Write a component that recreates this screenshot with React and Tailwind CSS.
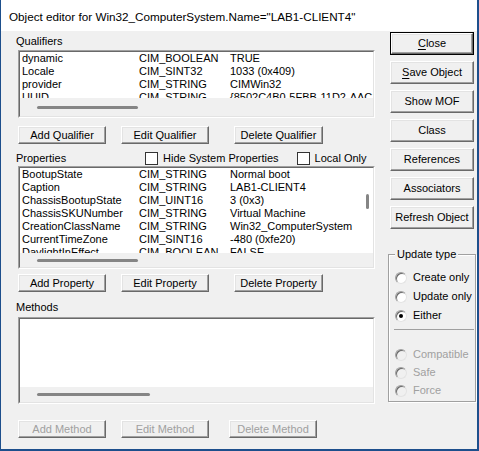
import clsx from "clsx";

const FONT = { fontFamily: "'Liberation Sans', Arial, sans-serif" };

const QUALIFIERS = [
  ["dynamic", "CIM_BOOLEAN", "TRUE"],
  ["Locale", "CIM_SINT32", "1033 (0x409)"],
  ["provider", "CIM_STRING", "CIMWin32"],
  ["UUID", "CIM_STRING", "{8502C4B0-5FBB-11D2-AAC1-006008C78BC7}"],
];

const PROPERTIES = [
  ["BootupState", "CIM_STRING", "Normal boot"],
  ["Caption", "CIM_STRING", "LAB1-CLIENT4"],
  ["ChassisBootupState", "CIM_UINT16", "3 (0x3)"],
  ["ChassisSKUNumber", "CIM_STRING", "Virtual Machine"],
  ["CreationClassName", "CIM_STRING", "Win32_ComputerSystem"],
  ["CurrentTimeZone", "CIM_SINT16", "-480 (0xfe20)"],
  ["DaylightInEffect", "CIM_BOOLEAN", "FALSE"],
];

// classic raised push button
const Btn = ({ children, className, disabled }) => (
  <button
    className={clsx(
      "flex items-center justify-center whitespace-nowrap bg-[#f0f0f0] text-[11px] leading-none border border-t-white border-l-white border-b-[#696969] border-r-[#696969] shadow-[inset_-1px_-1px_0_#a0a0a0,inset_1px_1px_0_#e3e3e3]",
      disabled ? "text-[#a0a0a0]" : "text-black",
      className
    )}
  >
    {children}
  </button>
);

// sunken list box with a thin horizontal scrollbar strip
const ListBox = ({ rows, height, bodyHeight, thumbW, vthumb }) => (
  <div
    className={clsx(
      "relative w-[357px] border border-t-[#a0a0a0] border-l-[#a0a0a0] border-b-white border-r-white",
      height
    )}
  >
    <div className="flex h-full flex-col border border-t-[#696969] border-l-[#696969] border-b-[#e3e3e3] border-r-[#e3e3e3]">
      <div className={clsx("overflow-hidden bg-white", bodyHeight)}>
        {rows.map(([a, b, c]) => (
          <div key={a} className="flex h-[13px] items-center whitespace-nowrap text-[11px] leading-none text-black">
            <span className="w-[119px] shrink-0 pl-[2px]">{a}</span>
            <span className="w-[91px] shrink-0">{b}</span>
            <span>{c}</span>
          </div>
        ))}
      </div>
      <div className="flex flex-1 items-center bg-[#f0f0f0] pl-[17px]">
        <div className={clsx("h-[3px] rounded-full bg-[#858585]", thumbW)} />
      </div>
    </div>
    {vthumb && <div className="absolute left-[347px] top-[27px] h-[15px] w-[3px] rounded-full bg-[#858585]" />}
  </div>
);

const Check = ({ label }) => (
  <div className="flex shrink-0 items-center gap-[5px] whitespace-nowrap">
    <div className="h-[13px] w-[13px] shrink-0 border border-[#333] bg-white" />
    <span className="text-[11px] leading-none">{label}</span>
  </div>
);

const Radio = ({ label, checked, disabled }) => (
  <div className="flex h-[13px] items-center gap-[6px] whitespace-nowrap">
    <div
      className={clsx(
        "flex h-[12px] w-[12px] shrink-0 items-center justify-center rounded-full border border-t-[#a0a0a0] border-l-[#a0a0a0] border-b-[#e3e3e3] border-r-[#e3e3e3] shadow-[inset_1px_1px_0_#696969]",
        disabled ? "bg-[#f0f0f0]" : "bg-white"
      )}
    >
      {checked && <div className="h-[4px] w-[4px] rounded-full bg-black" />}
    </div>
    <span className={clsx("text-[11px] leading-none", disabled ? "text-[#a0a0a0]" : "text-black")}>{label}</span>
  </div>
);

export default function App() {
  return (
    <div className="flex h-[451px] w-[479px] flex-col bg-[#1d4f8c] pb-[2px] pl-[1px] pr-[2px]" style={FONT}>
      {/* title bar */}
      <div className="flex h-[31px] shrink-0 items-center whitespace-nowrap bg-white pl-[8px] pt-[2px] text-[11.7px] text-black">
        Object editor for Win32_ComputerSystem.Name="LAB1-CLIENT4"
      </div>

      {/* client area */}
      <div className="flex flex-1 bg-[#f0f0f0] pl-[17px] text-black">
        {/* left panel */}
        <div className="flex w-[357px] flex-col">
          <div className="ml-[-2px] mt-[4px] h-[13px] text-[11px] leading-[13px]">Qualifiers</div>
          <div className="mt-[2px]">
            <ListBox rows={QUALIFIERS} height="h-[68px]" bodyHeight="h-[46px]" thumbW="w-[101px]" />
          </div>
          <div className="mt-[8px] flex h-[18px]">
            <Btn className="w-[88px]">Add Qualifier</Btn>
            <Btn className="ml-[15px] w-[88px]">Edit Qualifier</Btn>
            <Btn className="ml-[25px] w-[89px]">Delete Qualifier</Btn>
          </div>

          <div className="mt-[7px] flex h-[14px] items-center">
            <span className="ml-[-2px] w-[129px] shrink-0 text-[11px] leading-none">Properties</span>
            <Check label="Hide System Properties" />
            <div className="ml-[18px]">
              <Check label="Local Only" />
            </div>
          </div>
          <div className="mt-[1px]">
            <ListBox rows={PROPERTIES} height="h-[103px]" bodyHeight="h-[85px]" thumbW="w-[101px]" vthumb />
          </div>
          <div className="mt-[5px] flex h-[18px]">
            <Btn className="w-[88px]">Add Property</Btn>
            <Btn className="ml-[15px] w-[88px]">Edit Property</Btn>
            <Btn className="ml-[25px] w-[89px]">Delete Property</Btn>
          </div>

          <div className="ml-[-2px] mt-[9px] h-[13px] text-[11px] leading-[13px]">Methods</div>
          <div className="mt-[3px]">
            <ListBox rows={[]} height="h-[87px]" bodyHeight="h-[68px]" thumbW="w-[113px]" />
          </div>
          <div className="mt-[16px] flex h-[18px]">
            <Btn disabled className="w-[88px]">Add Method</Btn>
            <Btn disabled className="ml-[15px] w-[88px]">Edit Method</Btn>
            <Btn disabled className="ml-[20px] w-[88px]">Delete Method</Btn>
          </div>
        </div>

        {/* right panel */}
        <div className="ml-[13px] flex w-[88px] flex-col">
          <div className="ml-[2px] mt-[1px] flex w-[84px] flex-col gap-[6px]">
            <div className="h-[23px] border border-black">
              <Btn className="h-full w-full">
                <span className="underline underline-offset-2">C</span>lose
              </Btn>
            </div>
            <Btn className="h-[23px] w-full">
              <span className="underline underline-offset-2">S</span>ave Object
            </Btn>
            <Btn className="h-[23px] w-full">Show MOF</Btn>
            <Btn className="h-[23px] w-full">Class</Btn>
            <Btn className="h-[23px] w-full">References</Btn>
            <Btn className="h-[23px] w-full">Associators</Btn>
            <Btn className="h-[23px] w-full">Refresh Object</Btn>
          </div>

          {/* update type group */}
          <div className="relative mt-[25px] h-[148px] w-[88px] border border-[#a0a0a0] shadow-[1px_1px_0_white,inset_1px_1px_0_white]">
            <span className="absolute left-[6px] top-[-7px] whitespace-nowrap bg-[#f0f0f0] px-[2px] text-[11px] leading-[13px]">
              Update type
            </span>
            <div className="ml-[6px] mt-[16px] flex flex-col gap-[6px]">
              <Radio label="Create only" />
              <Radio label="Update only" />
              <Radio label="Either" checked />
            </div>
            <div className="ml-[5px] mt-[7px] h-[2px] w-[80px] border-t border-[#a0a0a0] border-b-white" />
            <div className="ml-[6px] mt-[17px] flex flex-col gap-[5px]">
              <Radio label="Compatible" disabled />
              <Radio label="Safe" disabled />
              <Radio label="Force" disabled />
            </div>
          </div>
        </div>
      </div>
    </div>
  );
}
